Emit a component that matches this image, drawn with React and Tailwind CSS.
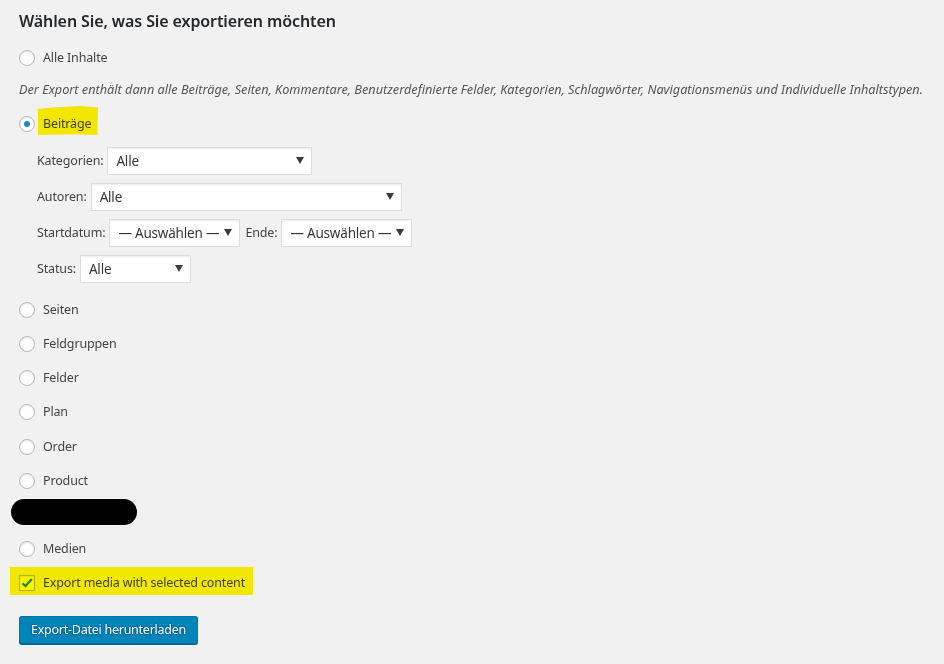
import React from 'react';

const font = { fontFamily: '"Noto Sans", "Open Sans", sans-serif' };

function Radio({ checked }) {
  return (
    <span className="flex h-4 w-4 shrink-0 items-center justify-center rounded-full border border-[#b4b9be] bg-white shadow-[inset_0_1px_2px_rgba(0,0,0,0.1)]">
      {checked && <span className="h-[6px] w-[6px] rounded-full bg-[#1e8cbe]" />}
    </span>
  );
}

function RadioRow({ label, checked, className = '', highlight }) {
  return (
    <label className={`flex h-4 items-center gap-2 ${className}`}>
      <Radio checked={checked} />
      <span className="relative text-[12.5px] leading-4 tracking-[-0.15px] text-[#444]">
        {label}
        {highlight && (
          <span className="pointer-events-none absolute -left-[5px] -top-[10px] h-[29px] w-[60px] bg-[#fff500] mix-blend-multiply [clip-path:polygon(0_10%,30%_4%,70%_0,100%_5%,99%_100%,60%_97%,0_100%)]" />
        )}
      </span>
    </label>
  );
}

function Select({ value, width }) {
  return (
    <div
      className="flex h-7 items-center justify-between border border-[#ddd] bg-white pl-2 pr-[7px] text-[13.5px] tracking-[-0.2px] whitespace-nowrap text-[#32373c] shadow-[inset_0_1px_2px_rgba(0,0,0,0.07)]"
      style={{ width }}
    >
      <span>{value}</span>
      <svg width="8" height="7" viewBox="0 0 8 7" className="mb-[2px] shrink-0">
        <path d="M0 0h8L4 7z" fill="#3c3c3c" />
      </svg>
    </div>
  );
}

function Filter({ label, children, className = '' }) {
  return (
    <div className={`flex items-center gap-1 text-[12.5px] tracking-[-0.15px] text-[#444] ${className}`}>
      <span>{label}</span>
      {children}
    </div>
  );
}

export default function App() {
  return (
    <div className="min-h-[664px] bg-[#f1f1f1] pl-[19px] pt-[9px]" style={font}>
      <h2 className="h-6 text-[16px] font-semibold leading-6 tracking-[-0.1px] text-[#23282d]">
        Wählen Sie, was Sie exportieren möchten
      </h2>

      <RadioRow label="Alle Inhalte" className="mt-[17px]" />

      <p className="mt-[13px] h-5 whitespace-nowrap text-[12.7px] italic leading-5 text-[#555]">
        Der Export enthält dann alle Beiträge, Seiten, Kommentare, Benutzerdefinierte Felder, Kategorien, Schlagwörter, Navigationsmenüs und Individuelle Inhaltstypen.
      </p>

      <RadioRow label="Beiträge" checked highlight className="mt-[17px]" />

      <div className="ml-[18px] mt-[15px] flex flex-col gap-2">
        <Filter label="Kategorien:">
          <Select value="Alle" width={205} />
        </Filter>
        <Filter label="Autoren:">
          <Select value="Alle" width={311} />
        </Filter>
        <Filter label="Startdatum:">
          <Select value="— Auswählen —" width={131} />
          <span className="ml-[1px]">Ende:</span>
          <Select value="— Auswählen —" width={131} />
        </Filter>
        <Filter label="Status:">
          <Select value="Alle" width={111} />
        </Filter>
      </div>

      <div className="mt-[19px] flex flex-col gap-[18px]">
        <RadioRow label="Seiten" />
        <RadioRow label="Feldgruppen" />
        <RadioRow label="Felder" />
        <RadioRow label="Plan" />
        <RadioRow label="Order" className="mt-[1px]" />
        <RadioRow label="Product" />
      </div>

      <div className="-ml-2 mt-[10px] h-[26px] w-[126px] rounded-full bg-black" />

      <RadioRow label="Medien" className="mt-4" />

      <div className="relative mt-[18px] flex h-4 items-center gap-2">
        <span className="flex h-4 w-4 items-center justify-center border border-[#b4b9be] bg-white shadow-[inset_0_1px_2px_rgba(0,0,0,0.1)]">
          <svg width="12" height="12" viewBox="0 0 12 12">
            <path d="M1.5 6.2l3 3L10.8 2" fill="none" stroke="#1e8cbe" strokeWidth="2.2" />
          </svg>
        </span>
        <span className="text-[12.5px] leading-4 tracking-[-0.15px] text-[#444]">Export media with selected content</span>
        <span className="pointer-events-none absolute -left-[9px] -top-[8px] h-7 w-[243px] bg-[#fff500] mix-blend-multiply" />
      </div>

      <button className="mt-[25px] h-7 rounded-[3px] border border-[#0073aa] border-b-[#006799] bg-[#0085ba] px-[11px] text-[12.5px] leading-[26px] tracking-[-0.25px] text-white shadow-[0_1px_0_#006799] [text-shadow:0_-1px_1px_#006799,1px_0_1px_#006799,0_1px_1px_#006799,-1px_0_1px_#006799]">
        Export-Datei herunterladen
      </button>
    </div>
  );
}
